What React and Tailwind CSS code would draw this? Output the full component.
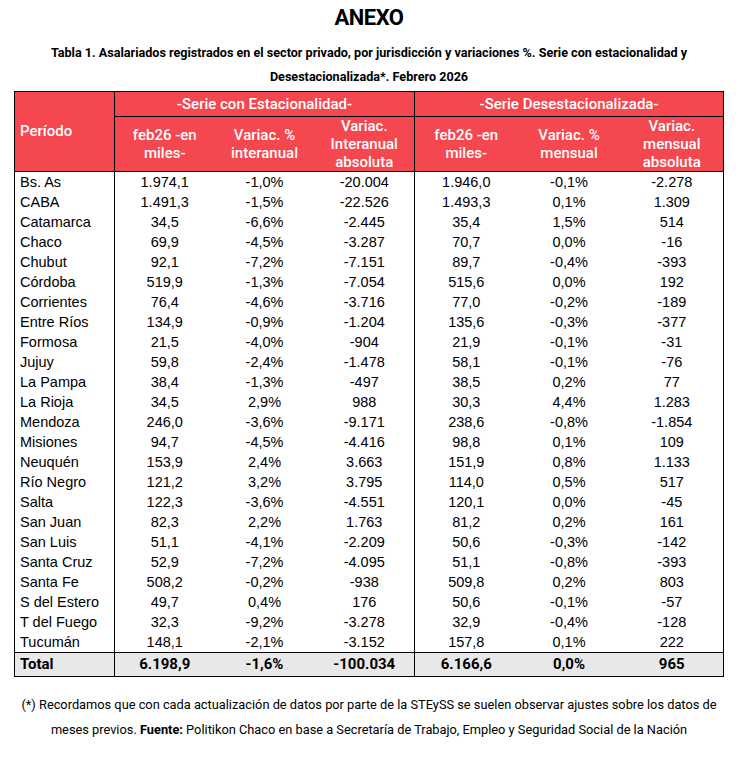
const rows = [
  ['Bs. As', '1.974,1', '-1,0%', '-20.004', '1.946,0', '-0,1%', '-2.278'],
  ['CABA', '1.491,3', '-1,5%', '-22.526', '1.493,3', '0,1%', '1.309'],
  ['Catamarca', '34,5', '-6,6%', '-2.445', '35,4', '1,5%', '514'],
  ['Chaco', '69,9', '-4,5%', '-3.287', '70,7', '0,0%', '-16'],
  ['Chubut', '92,1', '-7,2%', '-7.151', '89,7', '-0,4%', '-393'],
  ['Córdoba', '519,9', '-1,3%', '-7.054', '515,6', '0,0%', '192'],
  ['Corrientes', '76,4', '-4,6%', '-3.716', '77,0', '-0,2%', '-189'],
  ['Entre Ríos', '134,9', '-0,9%', '-1.204', '135,6', '-0,3%', '-377'],
  ['Formosa', '21,5', '-4,0%', '-904', '21,9', '-0,1%', '-31'],
  ['Jujuy', '59,8', '-2,4%', '-1.478', '58,1', '-0,1%', '-76'],
  ['La Pampa', '38,4', '-1,3%', '-497', '38,5', '0,2%', '77'],
  ['La Rioja', '34,5', '2,9%', '988', '30,3', '4,4%', '1.283'],
  ['Mendoza', '246,0', '-3,6%', '-9.171', '238,6', '-0,8%', '-1.854'],
  ['Misiones', '94,7', '-4,5%', '-4.416', '98,8', '0,1%', '109'],
  ['Neuquén', '153,9', '2,4%', '3.663', '151,9', '0,8%', '1.133'],
  ['Río Negro', '121,2', '3,2%', '3.795', '114,0', '0,5%', '517'],
  ['Salta', '122,3', '-3,6%', '-4.551', '120,1', '0,0%', '-45'],
  ['San Juan', '82,3', '2,2%', '1.763', '81,2', '0,2%', '161'],
  ['San Luis', '51,1', '-4,1%', '-2.209', '50,6', '-0,3%', '-142'],
  ['Santa Cruz', '52,9', '-7,2%', '-4.095', '51,1', '-0,8%', '-393'],
  ['Santa Fe', '508,2', '-0,2%', '-938', '509,8', '0,2%', '803'],
  ['S del Estero', '49,7', '0,4%', '176', '50,6', '-0,1%', '-57'],
  ['T del Fuego', '32,3', '-9,2%', '-3.278', '32,9', '-0,4%', '-128'],
  ['Tucumán', '148,1', '-2,1%', '-3.152', '157,8', '0,1%', '222'],
]

const total = ['Total', '6.198,9', '-1,6%', '-100.034', '6.166,6', '0,0%', '965']

const cond = { fontFamily: 'Roboto, "Liberation Sans", sans-serif' }

export default function App() {
  return (
    <div className="w-[738px] h-[759px] bg-white text-black" style={{ fontFamily: '"Liberation Sans", Arial, sans-serif' }}>
      <h1 className="pt-[6px] text-center text-[22px] leading-[24px] font-bold tracking-[-0.5px]" style={cond}>
        ANEXO
      </h1>
      <p className="mt-[11px] text-center text-[12.6px] leading-[24px] font-bold whitespace-nowrap" style={cond}>
        Tabla 1. Asalariados registrados en el sector privado, por jurisdicción y variaciones %. Serie con estacionalidad y
        <br />
        Desestacionalizada*. Febrero 2026
      </p>

      <table className="ml-[14px] mt-[2px] w-[709px] table-fixed border-collapse border-[1.5px] border-black text-[14.5px]">
        <colgroup>
          <col className="w-[100px]" />
          <col className="w-[100px]" />
          <col className="w-[100px]" />
          <col className="w-[100px]" />
          <col className="w-[103px]" />
          <col className="w-[103px]" />
          <col className="w-[103px]" />
        </colgroup>
        <thead className="bg-[#f5474f] text-white font-medium text-[15px]" style={cond}>
          <tr className="h-[25px]">
            <th rowSpan={2} className="border-r border-black pl-[5px] text-left font-medium">Período</th>
            <th colSpan={3} className="border-r border-b border-black font-medium">-Serie con Estacionalidad-</th>
            <th colSpan={3} className="border-b border-black font-medium">-Serie Desestacionalizada-</th>
          </tr>
          <tr className="h-[55px] leading-[18px]">
            <th className="font-medium px-1">feb26 -en<br />miles-</th>
            <th className="font-medium px-1">Variac. %<br />interanual</th>
            <th className="font-medium px-1 border-r border-black">Variac.<br />Interanual<br />absoluta</th>
            <th className="font-medium px-1">feb26 -en<br />miles-</th>
            <th className="font-medium px-1">Variac. %<br />mensual</th>
            <th className="font-medium px-1">Variac.<br />mensual<br />absoluta</th>
          </tr>
        </thead>
        <tbody className="border-t border-black">
          {rows.map((r) => (
            <tr key={r[0]} className="h-[20px] leading-[20px]">
              <td className="border-r border-black pl-[5px] whitespace-nowrap">{r[0]}</td>
              <td className="text-center">{r[1]}</td>
              <td className="text-center">{r[2]}</td>
              <td className="text-center border-r border-black">{r[3]}</td>
              <td className="text-center">{r[4]}</td>
              <td className="text-center">{r[5]}</td>
              <td className="text-center">{r[6]}</td>
            </tr>
          ))}
          <tr className="h-[21px] bg-[#e8e8e8] border-t border-black font-bold text-[15px]" style={cond}>
            <td className="border-r border-black pl-[5px]">{total[0]}</td>
            <td className="text-center">{total[1]}</td>
            <td className="text-center">{total[2]}</td>
            <td className="text-center border-r border-black">{total[3]}</td>
            <td className="text-center">{total[4]}</td>
            <td className="text-center">{total[5]}</td>
            <td className="text-center">{total[6]}</td>
          </tr>
        </tbody>
      </table>

      <p className="mt-[15px] text-center text-[12.8px] leading-[25px] whitespace-nowrap" style={cond}>
        (*) Recordamos que con cada actualización de datos por parte de la STEySS se suelen observar ajustes sobre los datos de
        <br />
        meses previos. <span className="font-bold">Fuente:</span> Politikon Chaco en base a Secretaría de Trabajo, Empleo y Seguridad Social de la Nación
      </p>
    </div>
  )
}
